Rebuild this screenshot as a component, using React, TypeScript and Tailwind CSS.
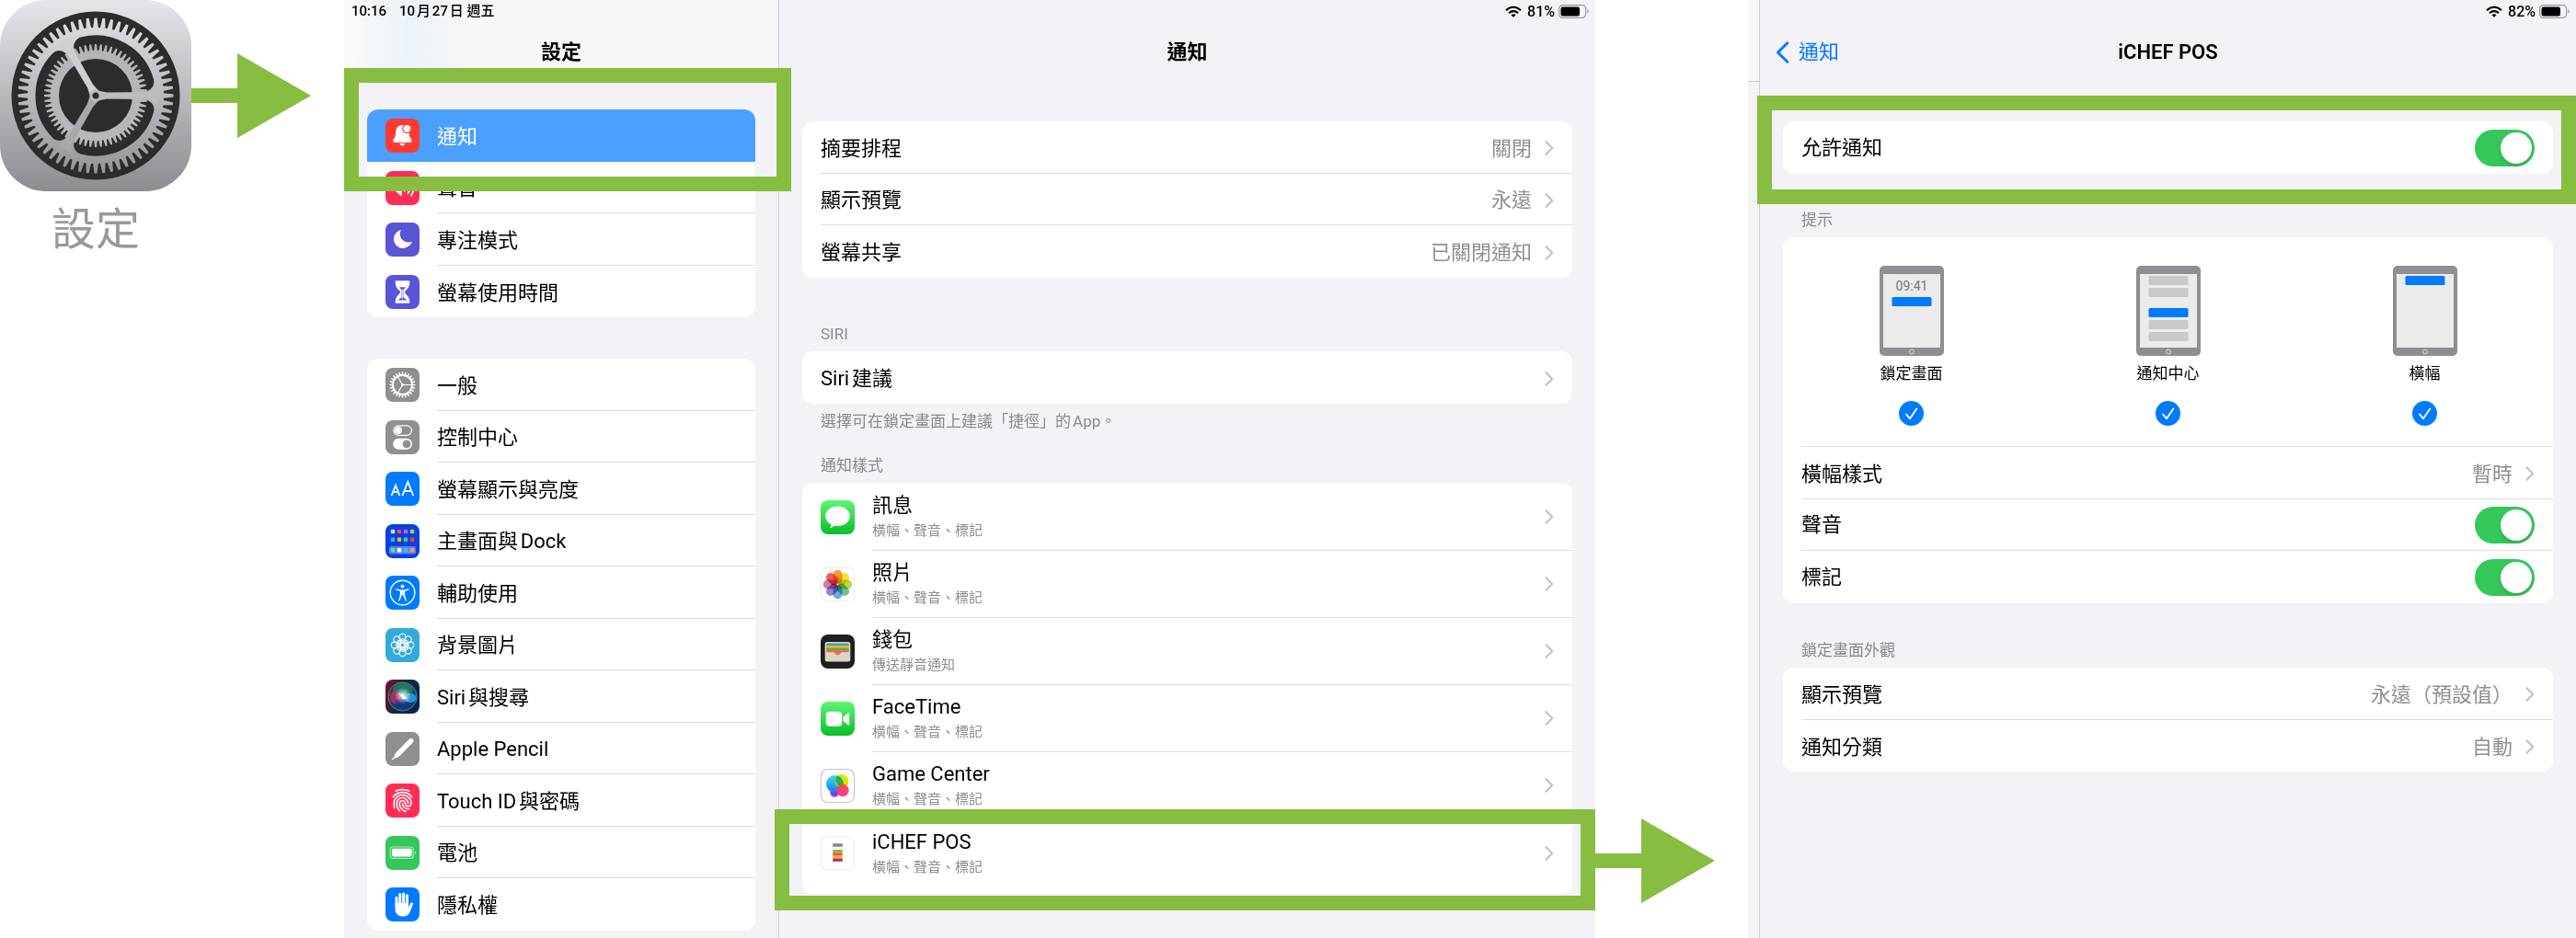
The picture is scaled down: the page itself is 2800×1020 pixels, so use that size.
import type { ReactNode } from 'react'
import { IoFingerPrint } from 'react-icons/io5'

/* ---------- geometry helpers for the gear drawings ---------- */

function polar(cx: number, cy: number, r: number, deg: number) {
  const a = (deg * Math.PI) / 180
  return `${(cx + r * Math.cos(a)).toFixed(2)},${(cy + r * Math.sin(a)).toFixed(2)}`
}

function gearPoints(c: number, count: number, base: number, tip: number, rootShare = 0.36, tipShare = 0.16) {
  const step = 360 / count
  const points: string[] = []
  for (let i = 0; i < count; i++) {
    const a = i * step
    points.push(
      polar(c, c, base, a - step * rootShare),
      polar(c, c, tip, a - step * tipShare),
      polar(c, c, tip, a + step * tipShare),
      polar(c, c, base, a + step * rootShare),
    )
  }
  return points.join(' ')
}

/* ---------- large settings icon ---------- */

function SettingsAppIcon() {
  return (
    <svg viewBox="0 0 208 208" className="size-52" aria-hidden="true">
      <defs>
        <linearGradient id="metal" x1="0" y1="0" x2="0" y2="208" gradientUnits="userSpaceOnUse">
          <stop offset="0" stopColor="#e6e5ea" />
          <stop offset="1" stopColor="#8d8c91" />
        </linearGradient>
        <linearGradient id="metalInner" x1="0" y1="40" x2="0" y2="170" gradientUnits="userSpaceOnUse">
          <stop offset="0" stopColor="#b4b3b8" />
          <stop offset="1" stopColor="#b9b8bd" />
        </linearGradient>
      </defs>
      <rect width="208" height="208" rx="50" fill="url(#metal)" />
      <circle cx="104" cy="104" r="91.5" fill="#2c2c2c" />
      <polygon points={gearPoints(104, 60, 74, 84.5)} fill="url(#metal)" />
      {[0, 120, 240].map((a) => (
        <path
          key={a}
          d={`M${polar(104, 104, 17.3, a + 60)} L${polar(104, 104, 55.5, a + 15.5)} A55.5,55.5 0 0 1 ${polar(104, 104, 55.5, a + 104.5)} Z`}
          fill="#2c2c2c"
          stroke="#2c2c2c"
          strokeWidth="20"
          strokeLinejoin="round"
        />
      ))}
      <circle cx="104" cy="104" r="40" fill="#2c2c2c" />
      <path
        fillRule="evenodd"
        fill="url(#metalInner)"
        d={`M${gearPoints(104, 60, 49, 56).split(' ').join(' L')} Z M144,104 A40,40 0 1 0 64,104 A40,40 0 1 0 144,104 Z`}
      />
      {[0, 120, 240].map((a) => (
        <path
          key={a}
          d="M104 98 L116 100.500 L162 100 Q168 99 171 94 L171 114 Q168 109 162 108 L116 107.500 L104 110 Z"
          transform={`rotate(${a} 104 104)`}
          fill={a === 240 ? '#cfced3' : a === 0 ? '#bcbbc0' : '#a9a8ad'}
        />
      ))}
      <circle cx="104" cy="104" r="6.500" fill="#bcbbc0" />
      <circle cx="104" cy="104" r="3.500" fill="#2c2c2c" />
    </svg>
  )
}

/* ---------- list icons, all drawn on a 37 x 37 grid ---------- */

function Tile({ color, children }: { color: string; children: ReactNode }) {
  return (
    <svg viewBox="0 0 37 37" className="size-[37px] shrink-0" aria-hidden="true">
      <rect width="37" height="37" rx="8" fill={color} />
      {children}
    </svg>
  )
}

const bellIcon = (
  <Tile color="#ff3b30">
    <path
      d="M18.300 7c-4.600 0-6.800 3.200-7 7.300-.2 4.400-.9 5.900-2.300 7.700-1.100 1.400-1 4 .9 4h17c1.900 0 2-2.600.9-4-1.400-1.800-2.100-3.300-2.300-7.700-.2-4.100-2.600-7.300-7.200-7.300z"
      fill="#fff"
    />
    <path d="M15.300 27h6c-.3 1.500-1.400 2.400-3 2.400s-2.700-.9-3-2.400z" fill="#fff" />
    <circle cx="23.300" cy="10.800" r="5.200" fill="#ff3b30" />
    <circle cx="23.300" cy="10.800" r="3.900" fill="#fff" />
  </Tile>
)

const soundIcon = (
  <Tile color="#ff2d55">
    <path d="M6.500 15.500h4l6-5.200c.6-.5 1.200-.2 1.200.6v15.200c0 .8-.6 1.100-1.200.6l-6-5.200h-4z" fill="#fff" />
    <g fill="none" stroke="#fff" strokeWidth="1.800" strokeLinecap="round">
      <path d="M21 15.200c1.200 1.900 1.200 4.700 0 6.600M24.500 12.800c2.200 3.300 2.200 8.100 0 11.400M28 10.400c3.200 4.700 3.200 11.500 0 16.200" />
    </g>
  </Tile>
)

const moonIcon = (
  <Tile color="#5856d6">
    <path
      d="M16.300 8.200c-4.300 1.200-7.300 5.100-7.300 9.700 0 5.500 4.500 10 10 10 4.300 0 8-2.600 9.700-6.300.2-.5-.2-.8-.7-.6-6.300 2-12.300-2.400-12.300-9 0-1.200.4-2.400 1-3.300.3-.4 0-.6-.4-.5z"
      fill="#fff"
    />
  </Tile>
)

const hourglassIcon = (
  <Tile color="#5856d6">
    <path
      d="M11.800 6.300h13.400c1 0 1.300.9 1.100 1.900-.4 5-2.300 6.700-4.400 8.700-1.200 1.200-1.200 2.300 0 3.500 2.100 1.900 4 3.600 4.400 8.500.1 1-.2 1.800-1.100 1.800H11.800c-.9 0-1.200-.8-1.100-1.800.4-4.900 2.300-6.600 4.400-8.500 1.200-1.200 1.200-2.300 0-3.500-2.100-2-4-3.700-4.400-8.700-.2-1 .1-1.900 1.100-1.900z"
      fill="#fff"
    />
    <path
      d="M15 13.300h7c-.7 1.100-1.800 1.900-2.600 2.900v8.200c1.300.8 3.100 1.700 3.600 3H14c.5-1.300 2.300-2.200 3.600-3v-8.200c-.8-1-1.900-1.800-2.600-2.900z"
      fill="#5856d6"
    />
    <path d="M18.500 15.500v11" stroke="#fff" strokeWidth="0.700" />
  </Tile>
)

const generalIcon = (
  <Tile color="#8e8e93">
    <polygon points={gearPoints(18.5, 24, 11.6, 14.2, 0.28, 0.16)} fill="#fff" />
    <circle cx="18.500" cy="18.500" r="9.600" fill="#8e8e93" />
    <g stroke="#fff" strokeWidth="1.100">
      <path d="M18.500 18.500H29M18.500 18.500L13.300 9.500M18.500 18.500L13.300 27.500" />
    </g>
    <circle cx="18.500" cy="18.500" r="1.400" fill="#fff" />
  </Tile>
)

const controlIcon = (
  <Tile color="#8e8e93">
    <rect x="8.800" y="5.800" width="19.600" height="10.600" rx="5.300" fill="none" stroke="#fff" strokeWidth="1.200" />
    <circle cx="14" cy="11.100" r="4" fill="#fff" />
    <rect x="8.200" y="19.800" width="20.800" height="12" rx="6" fill="#fff" />
    <circle cx="23" cy="25.800" r="4.400" fill="#8e8e93" />
  </Tile>
)

const displayIcon = (
  <Tile color="#007aff">
    <path
      d="M6.600 26L11 14.800L15.400 26M8.200 22.200H13.800M18.300 26L24.300 11L30.300 26M20.400 21H28.200"
      fill="none"
      stroke="#fff"
      strokeWidth="1.800"
    />
  </Tile>
)

const homeDots = [
  ['#d9d9d9', '#ff3b6b', '#bf5af2', '#a4d530'],
  ['#1fb6ff', '#ffb400', '#30d18a', '#ff3b30'],
  ['#4cf06a', '#ffffff', '#20c8ff', '#ff9a3c'],
]

const homeIcon = (
  <Tile color="#0a3fe0">
    <rect x="4" y="24" width="29" height="8.500" rx="2" fill="#5c82ef" />
    {homeDots.map((row, y) =>
      row.map((fill, x) => (
        <rect key={`${x}-${y}`} x={5.8 + x * 7} y={[5.8, 14.6, 26][y]} width="4.400" height="4.400" rx="1" fill={fill} />
      )),
    )}
  </Tile>
)

const accessibilityIcon = (
  <Tile color="#007aff">
    <circle cx="18.500" cy="18.500" r="13.300" fill="none" stroke="#fff" strokeWidth="1.400" />
    <circle cx="18.500" cy="11.600" r="1.900" fill="#fff" />
    <path
      d="M11.900 14.300l4.600 1c1.300.3 2.700.3 4 0l4.600-1c.9-.1 1 1 .3 1.200l-4.200 1.200c-.4 2.200 0 4.500.6 6.700l1 3.400c.2.9-.9 1.200-1.200.4l-2.700-6.400h-.8l-2.700 6.400c-.3.800-1.400.5-1.200-.4l1-3.400c.6-2.200 1-4.500.6-6.700l-4.200-1.200c-.8-.2-.6-1.400.3-1.200z"
      fill="#fff"
    />
  </Tile>
)

const wallpaperIcon = (
  <Tile color="#34aadc">
    <g fill="none" stroke="#fff" strokeWidth="1.100">
      {[0, 45, 90, 135, 180, 225, 270, 315].map((a) => {
        const [x, y] = polar(18.5, 18.5, 8.6, a).split(',')
        return <circle key={a} cx={x} cy={y} r="3.600" />
      })}
      {[0, 45, 90, 135].map((a) => (
        <ellipse key={a} cx="18.500" cy="18.500" rx="2.200" ry="7" transform={`rotate(${a} 18.5 18.5)`} />
      ))}
    </g>
  </Tile>
)

const siriIcon = (
  <svg viewBox="0 0 37 37" className="size-[37px] shrink-0" aria-hidden="true">
    <defs>
      <linearGradient id="siriBg" x1="0" y1="0.300" x2="1" y2="0.700">
        <stop offset="0" stopColor="#6d1136" />
        <stop offset="0.500" stopColor="#0d2a3c" />
        <stop offset="1" stopColor="#0b2547" />
      </linearGradient>
      <radialGradient id="siriGlow">
        <stop offset="0" stopColor="#ffffff" />
        <stop offset="0.350" stopColor="#ffffff" stopOpacity="0.600" />
        <stop offset="1" stopColor="#ffffff" stopOpacity="0" />
      </radialGradient>
      <linearGradient id="siriRing" x1="0" y1="0" x2="1" y2="1">
        <stop offset="0" stopColor="#e0457b" />
        <stop offset="0.450" stopColor="#2fa07d" />
        <stop offset="1" stopColor="#2d7ff0" />
      </linearGradient>
    </defs>
    <rect width="37" height="37" rx="8" fill="url(#siriBg)" />
    <circle cx="18.500" cy="18.500" r="15.500" fill="#15474f" stroke="url(#siriRing)" strokeWidth="1" />
    <ellipse cx="19" cy="11" rx="11" ry="7.500" fill="#1f8a68" opacity="0.700" />
    <ellipse cx="11" cy="19" rx="6" ry="7.500" fill="#d5246b" opacity="0.750" />
    <ellipse cx="20" cy="26" rx="10" ry="6.500" fill="#1f2f9c" opacity="0.600" />
    <ellipse cx="27" cy="20" rx="6.500" ry="5" fill="#28a5ef" opacity="0.850" />
    <circle cx="19" cy="17.500" r="9" fill="url(#siriGlow)" />
    <path d="M14 14L24 20.500L19 21.500Z" fill="#fff" opacity="0.900" />
  </svg>
)

const pencilIcon = (
  <Tile color="#8e8e93">
    <path d="M27.800 9.500L13.500 24.200" stroke="#fff" strokeWidth="5.400" strokeLinecap="round" />
    <path d="M10.200 23.500L14.300 27.500L9 28.800Z" fill="#fff" />
    <path d="M8.400 27.400L9.900 29L7.200 30.300C6.800 30.400 6.600 30.200 6.700 29.800Z" fill="#fff" />
  </Tile>
)

const touchIcon = (
  <span className="flex size-[37px] shrink-0 items-center justify-center rounded-lg bg-[#ff2d55] text-white">
    <IoFingerPrint size={27} aria-hidden="true" />
  </span>
)

const batteryIcon = (
  <Tile color="#34c759">
    <rect x="5.200" y="12" width="25" height="12.400" rx="3" fill="none" stroke="#a5e6b5" strokeWidth="1.200" />
    <rect x="7" y="13.800" width="21.600" height="8.800" rx="1.800" fill="#fff" />
    <path d="M32 16.200c1.300.4 1.300 3.600 0 4z" fill="#a5e6b5" />
  </Tile>
)

const handIcon = (
  <Tile color="#007aff">
    <g stroke="#fff" strokeWidth="3" strokeLinecap="round">
      <path d="M12 20V11.300M15.800 18V7.600M19.700 18V7M23.500 20V8.800" />
    </g>
    <path
      d="M10.500 17h14.500v4.500l1.800-3.600c.5-1.200 1.500-1.800 2.500-1.200.7.400.8 1.100.5 2l-3 7.600c-1.300 3.400-3.800 5.300-7.600 5.300-5.500 0-8.700-3.100-8.700-8.600z"
      fill="#fff"
    />
  </Tile>
)

function GreenDefs({ id }: { id: string }) {
  return (
    <defs>
      <linearGradient id={id} x1="0" y1="0" x2="0" y2="1">
        <stop offset="0" stopColor="#5df777" />
        <stop offset="1" stopColor="#0bbd29" />
      </linearGradient>
    </defs>
  )
}

const messagesIcon = (
  <Tile color="url(#msg)">
    <GreenDefs id="msg" />
    <path
      d="M18.500 6.500c7.500 0 13.300 4.800 13.300 10.800s-5.800 10.800-13.300 10.800c-1.300 0-2.500-.1-3.600-.4-1.300 1.200-3 2-5 2.200 1-.9 1.600-2 1.700-3.500-3.900-1.900-6.400-5.300-6.400-9.100 0-6 5.800-10.800 13.300-10.800z"
      fill="#fff"
    />
  </Tile>
)

const petals = ['#f7941d', '#f5e01e', '#b6d335', '#5cbb84', '#5aa0dd', '#8f78bd', '#c96fa8', '#ee4b43']

const photosIcon = (
  <Tile color="#e4e4e6">
    <rect x="0.700" y="0.700" width="35.600" height="35.600" rx="7.400" fill="#fff" />
    <g className="mix-blend-multiply">
      {petals.map((fill, i) => (
        <rect
          key={fill}
          x="13.500"
          y="2.800"
          width="10"
          height="15"
          rx="5"
          fill={fill}
          opacity="0.900"
          className="mix-blend-multiply"
          transform={`rotate(${i * 45} 18.5 18.5)`}
        />
      ))}
    </g>
  </Tile>
)

const walletIcon = (
  <Tile color="#1f1f1f">
    <rect x="4.700" y="8" width="27.600" height="21.500" rx="2.500" fill="#d9d6cb" />
    <rect x="6.200" y="9.500" width="24.600" height="3.200" rx="1.200" fill="#3c9bc9" />
    <rect x="6.200" y="12" width="24.600" height="3" fill="#fdb62a" />
    <rect x="6.200" y="14.500" width="24.600" height="3" fill="#5cb13c" />
    <path d="M6.200 17h24.600v2.200h-7.300c-1.200 0-1.600.5-2.200 1.500-1.300 2-4.300 2-5.600 0-.6-1-1-1.500-2.200-1.500H6.200z" fill="#f2675c" />
  </Tile>
)

const facetimeIcon = (
  <Tile color="url(#ft)">
    <GreenDefs id="ft" />
    <rect x="5.700" y="10.800" width="17.600" height="16" rx="4" fill="#fff" />
    <path d="M24.600 16.500l4.800-4c.8-.7 1.800-.3 1.800.7v11.200c0 1-1 1.400-1.800.7l-4.800-4z" fill="#fff" />
  </Tile>
)

const gameIcon = (
  <Tile color="#b4b4b6">
    <defs>
      <linearGradient id="gcBlue" x1="0" y1="0" x2="0" y2="1">
        <stop offset="0" stopColor="#35e0ef" />
        <stop offset="1" stopColor="#1a78f5" />
      </linearGradient>
      <linearGradient id="gcYellow" x1="1" y1="0" x2="0" y2="1">
        <stop offset="0" stopColor="#ffea00" />
        <stop offset="1" stopColor="#b8d000" />
      </linearGradient>
      <linearGradient id="gcPink" x1="0" y1="0" x2="0" y2="1">
        <stop offset="0" stopColor="#fb3f3f" />
        <stop offset="1" stopColor="#ff2d92" />
      </linearGradient>
    </defs>
    <rect x="0.800" y="0.800" width="35.400" height="35.400" rx="7.400" fill="#fff" />
    <circle cx="15" cy="26" r="4.700" fill="#9a2cf0" />
    <circle cx="15.500" cy="16.500" r="9.500" fill="url(#gcBlue)" />
    <circle cx="23" cy="13.500" r="7.500" fill="url(#gcYellow)" />
    <path d="M16.200 10.800A7.500 7.500 0 0 1 18.500 7.500A9.500 9.500 0 0 1 24.600 19.300A7.500 7.500 0 0 1 16.200 10.800Z" fill="#27ad62" />
    <circle cx="24" cy="23.500" r="6.700" fill="url(#gcPink)" opacity="0.920" />
  </Tile>
)

const ichefIcon = (
  <Tile color="#e8e8ea">
    <rect x="0.800" y="0.800" width="35.400" height="35.400" rx="7.400" fill="#fff" />
    <rect x="13.200" y="8.200" width="10.600" height="3.600" fill="#858a8d" />
    <rect x="13.200" y="15" width="10.600" height="3.300" fill="#86bd40" />
    <rect x="13.200" y="18.300" width="10.600" height="3.300" fill="#f15f2a" />
    <rect x="13.200" y="21.600" width="10.600" height="3" fill="#fbab3c" />
    <rect x="13.200" y="24.600" width="10.600" height="3.200" fill="#b5256c" />
  </Tile>
)

/* ---------- content ---------- */

type SidebarItem = { label: string; icon: ReactNode; selected?: boolean }

const sidebarGroups: SidebarItem[][] = [
  [
    { label: '通知', icon: bellIcon, selected: true },
    { label: '聲音', icon: soundIcon },
    { label: '專注模式', icon: moonIcon },
    { label: '螢幕使用時間', icon: hourglassIcon },
  ],
  [
    { label: '一般', icon: generalIcon },
    { label: '控制中心', icon: controlIcon },
    { label: '螢幕顯示與亮度', icon: displayIcon },
    { label: '主畫面與Dock', icon: homeIcon },
    { label: '輔助使用', icon: accessibilityIcon },
    { label: '背景圖片', icon: wallpaperIcon },
    { label: 'Siri與搜尋', icon: siriIcon },
    { label: 'Apple Pencil', icon: pencilIcon },
    { label: 'Touch ID與密碼', icon: touchIcon },
    { label: '電池', icon: batteryIcon },
    { label: '隱私權', icon: handIcon },
  ],
]

const apps = [
  { name: '訊息', detail: '橫幅、聲音、標記', icon: messagesIcon },
  { name: '照片', detail: '橫幅、聲音、標記', icon: photosIcon },
  { name: '錢包', detail: '傳送靜音通知', icon: walletIcon },
  { name: 'FaceTime', detail: '橫幅、聲音、標記', icon: facetimeIcon },
  { name: 'Game Center', detail: '橫幅、聲音、標記', icon: gameIcon },
  { name: 'iCHEF POS', detail: '橫幅、聲音、標記', icon: ichefIcon },
]

type Bar = { y: number; active?: boolean }

const alertStyles: { label: string; clock?: boolean; bars: Bar[] }[] = [
  { label: '鎖定畫面', clock: true, bars: [{ y: 34, active: true }] },
  { label: '通知中心', bars: [{ y: 11 }, { y: 24 }, { y: 46, active: true }, { y: 59 }, { y: 72 }] },
  { label: '橫幅', bars: [{ y: 11, active: true }] },
]

/* ---------- shared pieces ---------- */

function Chevron() {
  return (
    <svg viewBox="0 0 10 16" className="h-4 w-2.5 shrink-0" aria-hidden="true">
      <path d="M1.500 1.300L8.200 8L1.500 14.700" fill="none" stroke="#c4c4c7" strokeWidth="2.300" strokeLinecap="round" strokeLinejoin="round" />
    </svg>
  )
}

function StatusIcons({ percent }: { percent: string }) {
  return (
    <div className="absolute right-1.5 top-0 flex h-[25px] items-center text-base font-medium">
      <svg viewBox="0 0 18 13" className="mr-1.5 h-[13px] w-[18px]" aria-hidden="true">
        <g fill="none" stroke="#000" strokeWidth="2.200">
          <path d="M1 5.200C5.500 0.600 12.500 0.600 17 5.200" />
          <path d="M4 8.300C6.800 5.500 11.200 5.500 14 8.300" />
        </g>
        <path d="M9 12.800L6.400 10.200C7.900 8.900 10.100 8.900 11.600 10.200Z" />
      </svg>
      <span>{percent}</span>
      <svg viewBox="0 0 34 15" className="ml-1 h-[15px] w-[34px]" aria-hidden="true">
        <rect x="0.600" y="0.600" width="29" height="13.800" rx="4" fill="none" stroke="#9b9b9f" strokeWidth="1.200" />
        <rect x="2.500" y="2.400" width="20.500" height="10.200" rx="2.300" />
        <path d="M31.500 5c1.800.7 1.800 4.300 0 5z" fill="#9b9b9f" />
      </svg>
    </div>
  )
}

function Card({ children }: { children: ReactNode }) {
  return <div className="overflow-hidden rounded-xl bg-white">{children}</div>
}

function SectionLabel({ children }: { children: ReactNode }) {
  return <h3 className="mb-2 px-5 text-[17px] leading-[22px] text-[#8a8a8e]">{children}</h3>
}

const rowBox = 'group flex w-full pl-5 text-left odd:h-[57px] even:h-14'
const rowLine = 'flex flex-1 items-center border-b border-[#dcdcdf] pr-5 group-last:border-b-0'

function LinkRow({ label, value }: { label: string; value?: string }) {
  return (
    <button type="button" className={rowBox}>
      <span className={`${rowLine} h-full pt-0.5`}>
        <span className="flex-1">{label}</span>
        {value && <span className="mr-3.5 text-[#8e8e93]">{value}</span>}
        <Chevron />
      </span>
    </button>
  )
}

function ToggleRow({ label }: { label: string }) {
  return (
    <label className={rowBox}>
      <span className={rowLine}>
        <span className="flex-1">{label}</span>
        <input
          type="checkbox"
          role="switch"
          defaultChecked
          className="h-10 w-[65px] appearance-none rounded-full bg-[#e9e9eb] p-[3px] before:block before:size-[34px] before:rounded-full before:bg-white before:shadow-md before:content-[''] checked:bg-[#34c759] checked:before:translate-x-[25px]"
        />
      </span>
    </label>
  )
}

function TabletPreview({ clock, bars }: { clock?: boolean; bars: Bar[] }) {
  return (
    <svg viewBox="0 0 70 98" className="h-[98px] w-[70px]" aria-hidden="true">
      <rect width="70" height="98" rx="5" fill="#8e8e93" />
      <rect x="4" y="9" width="62" height="80" fill="#ebebeb" />
      <circle cx="35" cy="93.500" r="2.400" fill="none" stroke="#ebebeb" strokeWidth="0.900" />
      {clock && (
        <text x="35" y="27" textAnchor="middle" fontSize="14" fill="#77777c">
          09:41
        </text>
      )}
      {bars.map(({ y, active }) => (
        <rect key={y} x="13.500" y={y} width="43" height="10" rx="1.500" fill={active ? '#007aff' : '#c9c9cb'} />
      ))}
    </svg>
  )
}

function Arrow() {
  return (
    <svg viewBox="0 0 130 92" className="h-[92px] w-[130px]" aria-hidden="true">
      <path d="M0 38H50V0L130 46L50 92V54H0Z" fill="#87bd41" />
    </svg>
  )
}

/* ---------- screens ---------- */

function Sidebar() {
  return (
    <aside className="relative w-[473px] shrink-0 border-r border-[#d0d0d4]">
      <header className="h-[88px] border-b border-[#c8c8cb] bg-linear-to-r from-[#f9fafb] via-[#ecf3f8] via-15% to-[#f8f8f8] to-30%">
        <div className="flex h-6 gap-3.5 px-2 text-[15px] leading-[25px] font-medium">
          <span>10:16</span>
          <span>10月27日 週五</span>
        </div>
        <h1 className="pt-[17px] text-center leading-8 font-bold">設定</h1>
      </header>
      <nav className="flex flex-col gap-[45px] px-[25px] pt-[31px]">
        {sidebarGroups.map((group) => (
          <Card key={group[0].label}>
            {group.map(({ label, icon, selected }) => (
              <a
                key={label}
                href="#"
                aria-current={selected ? 'page' : undefined}
                className={`${rowBox} items-center gap-[19px] ${selected ? 'bg-[#4ba0ff] text-white' : ''}`}
              >
                {icon}
                <span className={`${rowLine} h-full pt-0.5 ${selected ? 'border-b-0' : ''}`}>{label}</span>
              </a>
            ))}
          </Card>
        ))}
      </nav>
      <div className="pointer-events-none absolute top-[74px] -right-3.5 left-0 z-10 h-[134px] border-16 border-[#87bd41]" />
    </aside>
  )
}

function NotificationsPane() {
  return (
    <main className="relative flex-1 px-[25px]">
      <StatusIcons percent="81%" />
      <h2 className="h-[132px] pt-[41px] text-center leading-8 font-bold">通知</h2>
      <Card>
        <LinkRow label="摘要排程" value="關閉" />
        <LinkRow label="顯示預覽" value="永遠" />
        <LinkRow label="螢幕共享" value="已關閉通知" />
      </Card>
      <section className="mt-[50px]">
        <SectionLabel>SIRI</SectionLabel>
        <Card>
          <LinkRow label="Siri建議" />
        </Card>
        <p className="mt-2 px-5 text-[17px] leading-[22px] text-[#8a8a8e]">選擇可在鎖定畫面上建議「捷徑」的App。</p>
      </section>
      <section className="mt-[26px]">
        <SectionLabel>通知樣式</SectionLabel>
        <Card>
          <div className="pt-px pb-2">
            {apps.map(({ name, detail, icon }) => (
              <button key={name} type="button" className="group flex h-[73px] w-full items-center gap-[19px] pl-5 text-left">
                {icon}
                <span className={`${rowLine} h-full`}>
                  <span className="flex flex-1 flex-col">
                    <span className="leading-[30px]">{name}</span>
                    <span className="text-[15px] leading-6 text-[#8e8e93]">{detail}</span>
                  </span>
                  <Chevron />
                </span>
              </button>
            ))}
          </div>
        </Card>
      </section>
      <div className="pointer-events-none absolute top-[880px] right-0 -left-[5px] h-[110px] border-16 border-[#87bd41]" />
    </main>
  )
}

function AppPane() {
  return (
    <main className="relative flex-1 px-[25px]">
      <StatusIcons percent="82%" />
      <header className="grid h-[132px] grid-cols-3 items-start pt-[41px] leading-8">
        <a href="#" className="-ml-2 flex items-center gap-2.5 text-[#007aff]">
          <svg viewBox="0 0 15 24" className="h-6 w-[15px]" aria-hidden="true">
            <path d="M12.800 1.800L2.500 12L12.800 22.200" fill="none" stroke="#007aff" strokeWidth="3" strokeLinecap="round" strokeLinejoin="round" />
          </svg>
          通知
        </a>
        <h2 className="text-center font-semibold">iCHEF POS</h2>
      </header>
      <Card>
        <ToggleRow label="允許通知" />
      </Card>
      <section className="mt-[39px]">
        <SectionLabel>提示</SectionLabel>
        <Card>
          <div className="grid h-[227px] grid-cols-3 pt-[31px]">
            {alertStyles.map(({ label, clock, bars }) => (
              <label key={label} className="flex flex-col items-center text-[17px] leading-[22px]">
                <TabletPreview clock={clock} bars={bars} />
                <span className="mt-2">{label}</span>
                <span className="relative mt-[19px] size-[27px]">
                  <input type="checkbox" defaultChecked className="peer block size-[27px] appearance-none rounded-full border-2 border-[#c4c4c7] checked:border-0 checked:bg-[#007aff]" />
                  <svg viewBox="0 0 27 27" className="pointer-events-none absolute inset-0 hidden peer-checked:block" aria-hidden="true">
                    <path d="M8 14.500L12 19.200L19.300 8.500" fill="none" stroke="#fff" strokeWidth="1.900" strokeLinecap="round" strokeLinejoin="round" />
                  </svg>
                </span>
              </label>
            ))}
          </div>
          <div className="ml-5 h-px bg-[#dcdcdf]" />
          <div>
            <LinkRow label="橫幅樣式" value="暫時" />
            <ToggleRow label="聲音" />
            <ToggleRow label="標記" />
          </div>
        </Card>
      </section>
      <section className="mt-10">
        <SectionLabel>鎖定畫面外觀</SectionLabel>
        <Card>
          <LinkRow label="顯示預覽" value="永遠（預設值）" />
          <LinkRow label="通知分類" value="自動" />
        </Card>
      </section>
    </main>
  )
}

export default function App() {
  return (
    <div
      lang="zh-Hant"
      className="grid min-h-screen grid-cols-[374px_minmax(0,1360fr)_166px_minmax(0,900fr)] overflow-hidden bg-white font-['Roboto','Noto_Sans_CJK_TC',sans-serif] text-[22px] text-black [text-autospace:normal]"
    >
      <div className="flex items-start">
        <figure className="flex flex-col items-center">
          <SettingsAppIcon />
          <figcaption className="mt-2 text-5xl leading-[68px] text-[#98989d]">設定</figcaption>
        </figure>
        <div className="mt-[58px]">
          <Arrow />
        </div>
      </div>

      <div className="flex bg-[#f2f2f7]">
        <Sidebar />
        <NotificationsPane />
      </div>

      <div className="pt-[890px]">
        <Arrow />
      </div>

      <div className="relative flex bg-[#f2f2f7]">
        <div className="w-[13px] shrink-0 border-r border-[#d0d0d4]">
          <div className="h-[89px] border-b border-[#c8c8cb] bg-[#f8f8f8]" />
        </div>
        <AppPane />
        <div className="pointer-events-none absolute top-[104px] right-0 left-2.5 h-[118px] border-16 border-[#87bd41]" />
      </div>
    </div>
  )
}
